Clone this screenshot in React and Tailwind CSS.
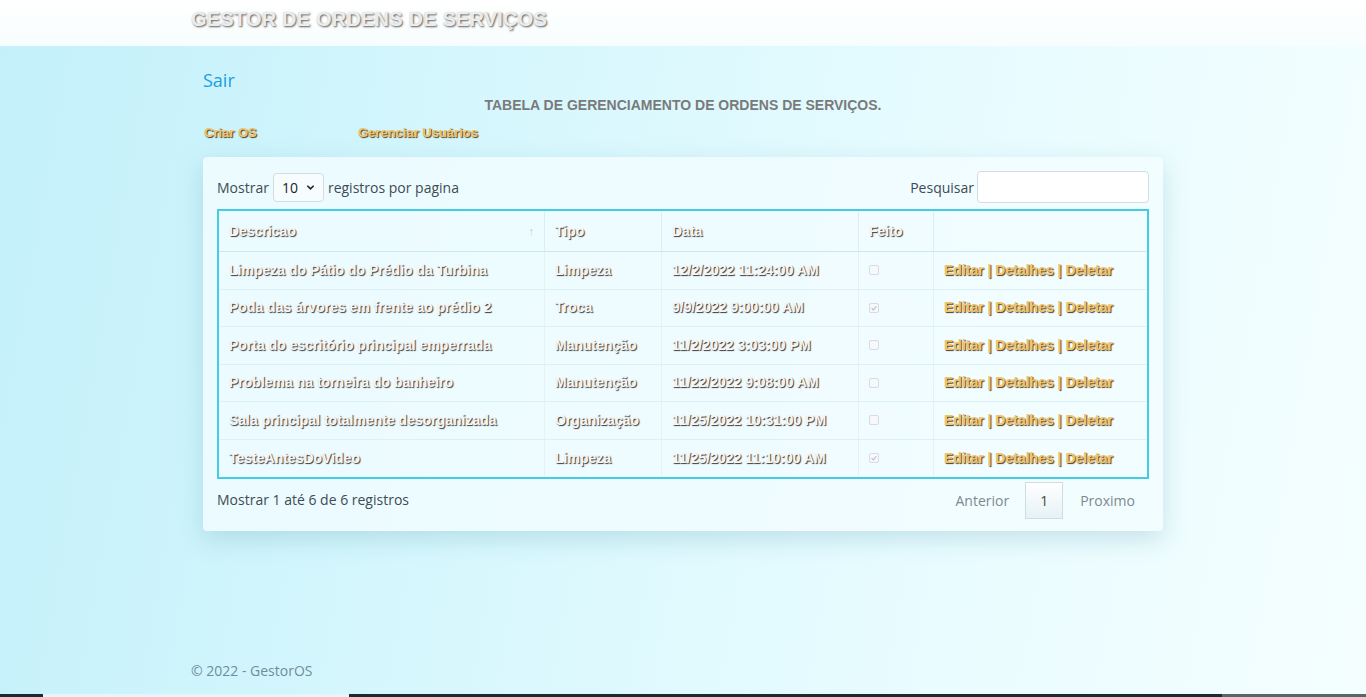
const rows = [
    { desc: 'Limpeza do Pátio do Prédio da Turbina', tipo: 'Limpeza', data: '12/2/2022 11:24:00 AM', feito: false },
    { desc: 'Poda das árvores em frente ao prédio 2', tipo: 'Troca', data: '9/9/2022 9:00:00 AM', feito: true },
    { desc: 'Porta do escritório principal emperrada', tipo: 'Manutenção', data: '11/2/2022 3:03:00 PM', feito: false },
    { desc: 'Problema na torneira do banheiro', tipo: 'Manutenção', data: '11/22/2022 9:08:00 AM', feito: false },
    { desc: 'Sala principal totalmente desorganizada', tipo: 'Organização', data: '11/25/2022 10:31:00 PM', feito: false },
    { desc: 'TesteAntesDoVideo', tipo: 'Limpeza', data: '11/25/2022 11:10:00 AM', feito: true },
];

const emboss = 'text-[#f6f6f6] [text-shadow:1px_1px_1px_#3a3a3a] font-bold';
const gold = 'text-[#f2c46a] [text-shadow:1px_1px_1px_#4a3a20] font-bold';

const Check = ({ on }) => (
    <span className="inline-block w-[10px] h-[10px] rounded-[2px] border border-[#d6dde0] bg-[#f6f8f9] relative">
        {on && (
            <svg viewBox="0 0 10 10" className="absolute inset-0 w-full h-full">
                <path d="M2 5.2 L4.2 7.3 L8 2.8" fill="none" stroke="#b8c0c4" strokeWidth="1.4" />
            </svg>
        )}
    </span>
);

const App = () => {
    return (
        <div className="w-[1366px] h-[697px] overflow-hidden flex flex-col font-['Liberation_Sans',Arial,sans-serif] bg-[linear-gradient(100deg,#c3f0fa_0%,#d6f7fd_35%,#e9fcff_70%,#f4feff_100%)]">
            <header className="h-[46px] shrink-0 bg-[linear-gradient(180deg,#ffffff,#f7fdfe)] pl-[191px] pt-[6px]">
                <span className="text-[20px] leading-[26px] font-bold text-[#ececec] [text-shadow:1px_1px_2px_#5a5a5a] tracking-[0.2px]">
                    GESTOR DE ORDENS DE SERVIÇOS
                </span>
            </header>

            <main className="flex-1 pl-[203px] pr-[203px] flex flex-col">
                <a className="mt-[22px] text-[18px] leading-[24px] text-[#1b9ee0] font-['Open_Sans',sans-serif] w-fit">Sair</a>
                <h2 className="mt-[4px] text-center text-[14px] leading-[18px] font-bold text-[#7a7a7a]">
                    TABELA DE GERENCIAMENTO DE ORDENS DE SERVIÇOS.
                </h2>
                <div className="mt-[11px] flex items-center text-[13px] leading-[16px] pl-[1px]">
                    <a className={`${gold} w-[154px]`}>Criar OS</a>
                    <a className={gold}>Gerenciar Usuários</a>
                </div>

                <div className="mt-[16px] w-[960px] h-[374px] bg-[#f3fdff]/80 rounded-[4px] shadow-[0_8px_24px_rgba(80,150,170,0.25)] px-[14px] pt-[14px] font-['Open_Sans',sans-serif]">
                    <div className="flex items-center justify-between h-[32px]">
                        <div className="flex items-center text-[14px] text-[#3f4b52]">
                            <span>Mostrar</span>
                            <span className="mx-[4px] w-[51px] h-[29px] border border-[#d2dde1] rounded-[4px] bg-white/60 flex items-center justify-between px-[8px] text-[#222]">
                                10
                                <svg viewBox="0 0 10 10" className="w-[9px] h-[9px]">
                                    <path d="M1.5 3 L5 6.5 L8.5 3" fill="none" stroke="#222" strokeWidth="1.8" />
                                </svg>
                            </span>
                            <span>registros por pagina</span>
                        </div>
                        <div className="flex items-center text-[14px] text-[#3f4b52]">
                            <span className="mr-[3px]">Pesquisar</span>
                            <span className="w-[172px] h-[32px] border border-[#d2dde1] rounded-[4px] bg-white" />
                        </div>
                    </div>

                    <div className="mt-[6px] border-2 border-[#44cbe6] font-['Liberation_Sans',Arial,sans-serif] text-[14px]">
                        <div className="grid grid-cols-[326px_117px_197px_75px_1fr] h-[41px] border-b border-[#c9e8ee] items-stretch">
                            <div className={`${emboss} flex items-center justify-between px-[10px] border-r border-[#d8eff3]`}>
                                Descricao
                                <span className="text-[#c8c8c8] text-[11px] font-normal [text-shadow:none]">↑</span>
                            </div>
                            <div className={`${emboss} flex items-center px-[10px] border-r border-[#d8eff3]`}>Tipo</div>
                            <div className={`${emboss} flex items-center px-[10px] border-r border-[#d8eff3]`}>Data</div>
                            <div className={`${emboss} flex items-center px-[10px] border-r border-[#d8eff3]`}>Feito</div>
                            <div />
                        </div>
                        {rows.map((r, i) => (
                            <div
                                key={i}
                                className={`grid grid-cols-[326px_117px_197px_75px_1fr] h-[37.5px] items-stretch ${i < rows.length - 1 ? 'border-b border-[#dcf1f5]' : ''}`}
                            >
                                <div className={`${emboss} flex items-center px-[10px] border-r border-[#e2f3f6]`}>{r.desc}</div>
                                <div className={`${emboss} flex items-center px-[10px] border-r border-[#e2f3f6]`}>{r.tipo}</div>
                                <div className={`${emboss} flex items-center px-[10px] border-r border-[#e2f3f6]`}>{r.data}</div>
                                <div className="flex items-center px-[10px] border-r border-[#e2f3f6]">
                                    <Check on={r.feito} />
                                </div>
                                <div className={`${gold} flex items-center px-[10px] whitespace-pre`}>
                                    Editar | Detalhes | Deletar
                                </div>
                            </div>
                        ))}
                    </div>

                    <div className="flex items-center justify-between h-[42px]">
                        <span className="text-[14px] text-[#3f4b52] -mt-[2px]">Mostrar 1 até 6 de 6 registros</span>
                        <div className="flex items-center text-[14px] text-[#7d8a90] mr-[14px]">
                            <span className="mr-[16px]">Anterior</span>
                            <span className="w-[38px] h-[37px] border border-[#cfdde1] bg-[linear-gradient(180deg,#ffffff,#e6f2f5)] flex items-center justify-center text-[#444]">1</span>
                            <span className="ml-[17px]">Proximo</span>
                        </div>
                    </div>
                </div>
            </main>

            <footer className="h-[49px] shrink-0 flex flex-col">
                <span className="pl-[191px] text-[14px] text-[#6f8d9c] font-['Open_Sans',sans-serif] mt-[15px]">© 2022 - GestorOS</span>
            </footer>
            <div className="h-[3px] shrink-0 flex">
                <div className="w-[43px] bg-[#1a2a30]" />
                <div className="w-[306px] bg-[#e8f4f6]" />
                <div className="w-[873px] bg-[#1c2b30]" />
                <div className="flex-1 bg-[#56676c]" />
            </div>
        </div>
    );
};

export default App;
